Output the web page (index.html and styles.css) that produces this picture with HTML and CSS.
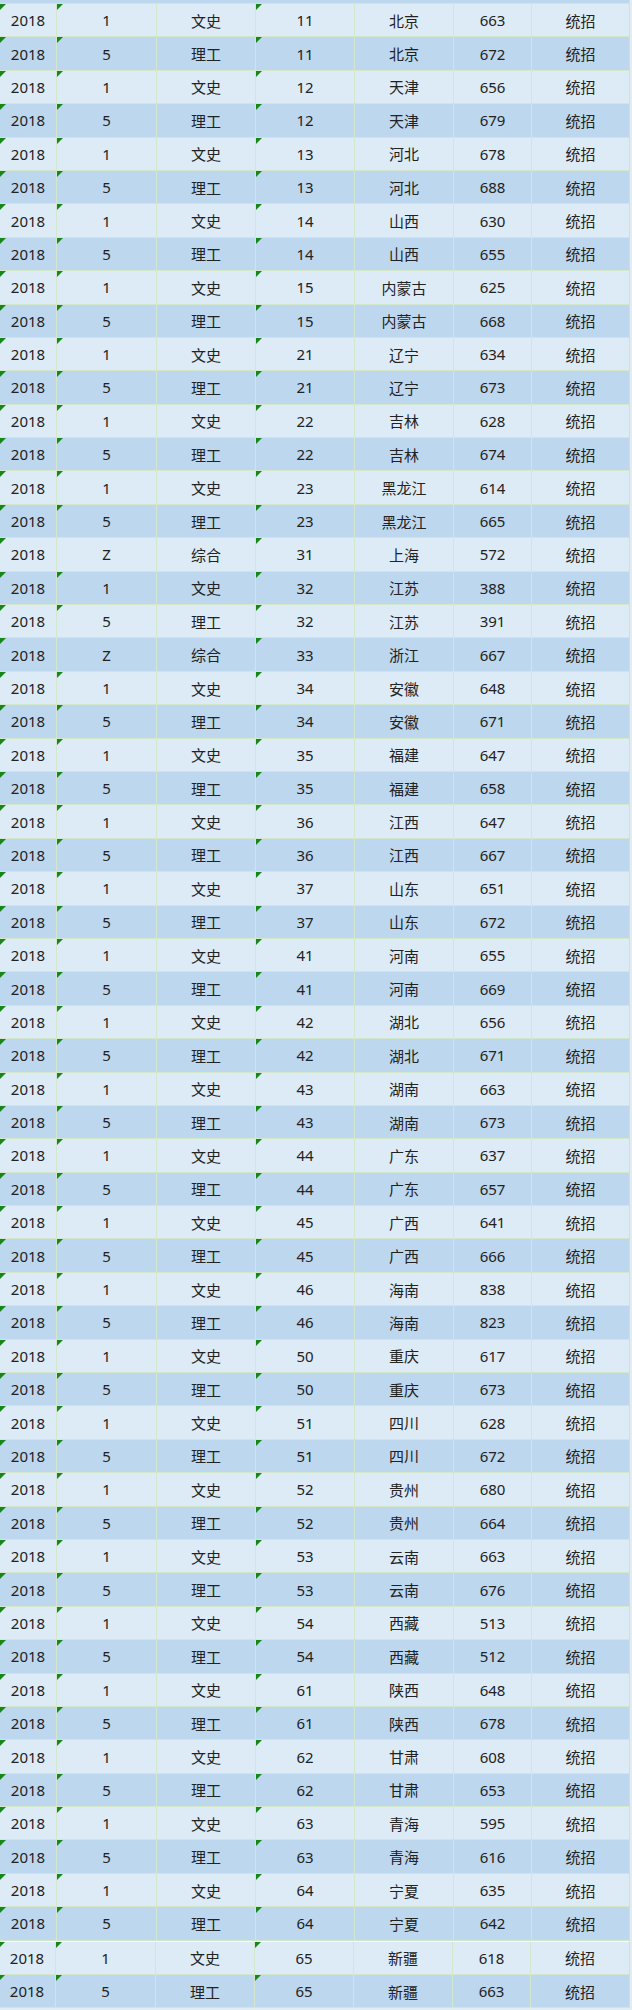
FILE: index.html
```html
<!DOCTYPE html>
<html lang="zh-CN">
<head>
<meta charset="utf-8">
<title>2018 录取分数</title>
<link rel="stylesheet" href="styles.css">
</head>
<body>
<div class="sheet">
  <div class="strip"></div>
  <div class="block">
    <div class="row"><div class="c t">2018</div><div class="c t">1</div><div class="c">文史</div><div class="c t">11</div><div class="c">北京</div><div class="c">663</div><div class="c">统招</div></div>
    <div class="row"><div class="c t">2018</div><div class="c t">5</div><div class="c">理工</div><div class="c t">11</div><div class="c">北京</div><div class="c">672</div><div class="c">统招</div></div>
    <div class="row"><div class="c t">2018</div><div class="c t">1</div><div class="c">文史</div><div class="c t">12</div><div class="c">天津</div><div class="c">656</div><div class="c">统招</div></div>
    <div class="row"><div class="c t">2018</div><div class="c t">5</div><div class="c">理工</div><div class="c t">12</div><div class="c">天津</div><div class="c">679</div><div class="c">统招</div></div>
    <div class="row"><div class="c t">2018</div><div class="c t">1</div><div class="c">文史</div><div class="c t">13</div><div class="c">河北</div><div class="c">678</div><div class="c">统招</div></div>
    <div class="row"><div class="c t">2018</div><div class="c t">5</div><div class="c">理工</div><div class="c t">13</div><div class="c">河北</div><div class="c">688</div><div class="c">统招</div></div>
    <div class="row"><div class="c t">2018</div><div class="c t">1</div><div class="c">文史</div><div class="c t">14</div><div class="c">山西</div><div class="c">630</div><div class="c">统招</div></div>
    <div class="row"><div class="c t">2018</div><div class="c t">5</div><div class="c">理工</div><div class="c t">14</div><div class="c">山西</div><div class="c">655</div><div class="c">统招</div></div>
    <div class="row"><div class="c t">2018</div><div class="c t">1</div><div class="c">文史</div><div class="c t">15</div><div class="c">内蒙古</div><div class="c">625</div><div class="c">统招</div></div>
    <div class="row"><div class="c t">2018</div><div class="c t">5</div><div class="c">理工</div><div class="c t">15</div><div class="c">内蒙古</div><div class="c">668</div><div class="c">统招</div></div>
    <div class="row"><div class="c t">2018</div><div class="c t">1</div><div class="c">文史</div><div class="c t">21</div><div class="c">辽宁</div><div class="c">634</div><div class="c">统招</div></div>
    <div class="row"><div class="c t">2018</div><div class="c t">5</div><div class="c">理工</div><div class="c t">21</div><div class="c">辽宁</div><div class="c">673</div><div class="c">统招</div></div>
    <div class="row"><div class="c t">2018</div><div class="c t">1</div><div class="c">文史</div><div class="c t">22</div><div class="c">吉林</div><div class="c">628</div><div class="c">统招</div></div>
    <div class="row"><div class="c t">2018</div><div class="c t">5</div><div class="c">理工</div><div class="c t">22</div><div class="c">吉林</div><div class="c">674</div><div class="c">统招</div></div>
    <div class="row"><div class="c t">2018</div><div class="c t">1</div><div class="c">文史</div><div class="c t">23</div><div class="c">黑龙江</div><div class="c">614</div><div class="c">统招</div></div>
    <div class="row"><div class="c t">2018</div><div class="c t">5</div><div class="c">理工</div><div class="c t">23</div><div class="c">黑龙江</div><div class="c">665</div><div class="c">统招</div></div>
    <div class="row"><div class="c t">2018</div><div class="c">Z</div><div class="c">综合</div><div class="c t">31</div><div class="c">上海</div><div class="c">572</div><div class="c">统招</div></div>
    <div class="row"><div class="c t">2018</div><div class="c t">1</div><div class="c">文史</div><div class="c t">32</div><div class="c">江苏</div><div class="c">388</div><div class="c">统招</div></div>
    <div class="row"><div class="c t">2018</div><div class="c t">5</div><div class="c">理工</div><div class="c t">32</div><div class="c">江苏</div><div class="c">391</div><div class="c">统招</div></div>
    <div class="row"><div class="c t">2018</div><div class="c">Z</div><div class="c">综合</div><div class="c t">33</div><div class="c">浙江</div><div class="c">667</div><div class="c">统招</div></div>
    <div class="row"><div class="c t">2018</div><div class="c t">1</div><div class="c">文史</div><div class="c t">34</div><div class="c">安徽</div><div class="c">648</div><div class="c">统招</div></div>
    <div class="row"><div class="c t">2018</div><div class="c t">5</div><div class="c">理工</div><div class="c t">34</div><div class="c">安徽</div><div class="c">671</div><div class="c">统招</div></div>
    <div class="row"><div class="c t">2018</div><div class="c t">1</div><div class="c">文史</div><div class="c t">35</div><div class="c">福建</div><div class="c">647</div><div class="c">统招</div></div>
    <div class="row"><div class="c t">2018</div><div class="c t">5</div><div class="c">理工</div><div class="c t">35</div><div class="c">福建</div><div class="c">658</div><div class="c">统招</div></div>
    <div class="row"><div class="c t">2018</div><div class="c t">1</div><div class="c">文史</div><div class="c t">36</div><div class="c">江西</div><div class="c">647</div><div class="c">统招</div></div>
    <div class="row"><div class="c t">2018</div><div class="c t">5</div><div class="c">理工</div><div class="c t">36</div><div class="c">江西</div><div class="c">667</div><div class="c">统招</div></div>
    <div class="row"><div class="c t">2018</div><div class="c t">1</div><div class="c">文史</div><div class="c t">37</div><div class="c">山东</div><div class="c">651</div><div class="c">统招</div></div>
    <div class="row"><div class="c t">2018</div><div class="c t">5</div><div class="c">理工</div><div class="c t">37</div><div class="c">山东</div><div class="c">672</div><div class="c">统招</div></div>
    <div class="row"><div class="c t">2018</div><div class="c t">1</div><div class="c">文史</div><div class="c t">41</div><div class="c">河南</div><div class="c">655</div><div class="c">统招</div></div>
    <div class="row"><div class="c t">2018</div><div class="c t">5</div><div class="c">理工</div><div class="c t">41</div><div class="c">河南</div><div class="c">669</div><div class="c">统招</div></div>
    <div class="row"><div class="c t">2018</div><div class="c t">1</div><div class="c">文史</div><div class="c t">42</div><div class="c">湖北</div><div class="c">656</div><div class="c">统招</div></div>
    <div class="row"><div class="c t">2018</div><div class="c t">5</div><div class="c">理工</div><div class="c t">42</div><div class="c">湖北</div><div class="c">671</div><div class="c">统招</div></div>
    <div class="row"><div class="c t">2018</div><div class="c t">1</div><div class="c">文史</div><div class="c t">43</div><div class="c">湖南</div><div class="c">663</div><div class="c">统招</div></div>
    <div class="row"><div class="c t">2018</div><div class="c t">5</div><div class="c">理工</div><div class="c t">43</div><div class="c">湖南</div><div class="c">673</div><div class="c">统招</div></div>
    <div class="row"><div class="c t">2018</div><div class="c t">1</div><div class="c">文史</div><div class="c t">44</div><div class="c">广东</div><div class="c">637</div><div class="c">统招</div></div>
    <div class="row"><div class="c t">2018</div><div class="c t">5</div><div class="c">理工</div><div class="c t">44</div><div class="c">广东</div><div class="c">657</div><div class="c">统招</div></div>
    <div class="row"><div class="c t">2018</div><div class="c t">1</div><div class="c">文史</div><div class="c t">45</div><div class="c">广西</div><div class="c">641</div><div class="c">统招</div></div>
    <div class="row"><div class="c t">2018</div><div class="c t">5</div><div class="c">理工</div><div class="c t">45</div><div class="c">广西</div><div class="c">666</div><div class="c">统招</div></div>
    <div class="row"><div class="c t">2018</div><div class="c t">1</div><div class="c">文史</div><div class="c t">46</div><div class="c">海南</div><div class="c">838</div><div class="c">统招</div></div>
    <div class="row"><div class="c t">2018</div><div class="c t">5</div><div class="c">理工</div><div class="c t">46</div><div class="c">海南</div><div class="c">823</div><div class="c">统招</div></div>
    <div class="row"><div class="c t">2018</div><div class="c t">1</div><div class="c">文史</div><div class="c t">50</div><div class="c">重庆</div><div class="c">617</div><div class="c">统招</div></div>
    <div class="row"><div class="c t">2018</div><div class="c t">5</div><div class="c">理工</div><div class="c t">50</div><div class="c">重庆</div><div class="c">673</div><div class="c">统招</div></div>
    <div class="row"><div class="c t">2018</div><div class="c t">1</div><div class="c">文史</div><div class="c t">51</div><div class="c">四川</div><div class="c">628</div><div class="c">统招</div></div>
    <div class="row"><div class="c t">2018</div><div class="c t">5</div><div class="c">理工</div><div class="c t">51</div><div class="c">四川</div><div class="c">672</div><div class="c">统招</div></div>
    <div class="row"><div class="c t">2018</div><div class="c t">1</div><div class="c">文史</div><div class="c t">52</div><div class="c">贵州</div><div class="c">680</div><div class="c">统招</div></div>
    <div class="row"><div class="c t">2018</div><div class="c t">5</div><div class="c">理工</div><div class="c t">52</div><div class="c">贵州</div><div class="c">664</div><div class="c">统招</div></div>
    <div class="row"><div class="c t">2018</div><div class="c t">1</div><div class="c">文史</div><div class="c t">53</div><div class="c">云南</div><div class="c">663</div><div class="c">统招</div></div>
    <div class="row"><div class="c t">2018</div><div class="c t">5</div><div class="c">理工</div><div class="c t">53</div><div class="c">云南</div><div class="c">676</div><div class="c">统招</div></div>
    <div class="row"><div class="c t">2018</div><div class="c t">1</div><div class="c">文史</div><div class="c t">54</div><div class="c">西藏</div><div class="c">513</div><div class="c">统招</div></div>
    <div class="row"><div class="c t">2018</div><div class="c t">5</div><div class="c">理工</div><div class="c t">54</div><div class="c">西藏</div><div class="c">512</div><div class="c">统招</div></div>
    <div class="row"><div class="c t">2018</div><div class="c t">1</div><div class="c">文史</div><div class="c t">61</div><div class="c">陕西</div><div class="c">648</div><div class="c">统招</div></div>
    <div class="row"><div class="c t">2018</div><div class="c t">5</div><div class="c">理工</div><div class="c t">61</div><div class="c">陕西</div><div class="c">678</div><div class="c">统招</div></div>
    <div class="row"><div class="c t">2018</div><div class="c t">1</div><div class="c">文史</div><div class="c t">62</div><div class="c">甘肃</div><div class="c">608</div><div class="c">统招</div></div>
    <div class="row"><div class="c t">2018</div><div class="c t">5</div><div class="c">理工</div><div class="c t">62</div><div class="c">甘肃</div><div class="c">653</div><div class="c">统招</div></div>
    <div class="row"><div class="c t">2018</div><div class="c t">1</div><div class="c">文史</div><div class="c t">63</div><div class="c">青海</div><div class="c">595</div><div class="c">统招</div></div>
    <div class="row"><div class="c t">2018</div><div class="c t">5</div><div class="c">理工</div><div class="c t">63</div><div class="c">青海</div><div class="c">616</div><div class="c">统招</div></div>
    <div class="row"><div class="c t">2018</div><div class="c t">1</div><div class="c">文史</div><div class="c t">64</div><div class="c">宁夏</div><div class="c">635</div><div class="c">统招</div></div>
    <div class="row"><div class="c t">2018</div><div class="c t">5</div><div class="c">理工</div><div class="c t">64</div><div class="c">宁夏</div><div class="c">642</div><div class="c">统招</div></div>
  </div>
  <div class="block block-tail">
    <div class="row"><div class="c t">2018</div><div class="c t">1</div><div class="c">文史</div><div class="c t">65</div><div class="c">新疆</div><div class="c">618</div><div class="c">统招</div></div>
    <div class="row"><div class="c t">2018</div><div class="c t">5</div><div class="c">理工</div><div class="c t">65</div><div class="c">新疆</div><div class="c">663</div><div class="c">统招</div></div>
  </div>
</div>
</body>
</html>
```

FILE: styles.css
```css
html, body {
  margin: 0;
  padding: 0;
}

body {
  background: #e3edf1;
  font-family: "Noto Sans", "Noto Sans CJK SC", sans-serif;
  font-size: 15px;
  color: #222222;
}

.sheet {
  width: 632px;
  height: 2010px;
  overflow: hidden;
}

.strip {
  height: 4px;
  width: 630px;
  background: #bdd7ee;
  border-bottom: 1px solid #d2e7cc;
  border-right: 1px solid #d2e7cc;
  box-sizing: border-box;
}

.block {
  width: 630px;
  border-right: 1px solid #cfe0d4;
  box-sizing: border-box;
}

.block-tail {
  border-top: 1px solid #f6fafb;
  width: 631px;
  margin-left: -1px;
}

.row {
  display: grid;
  grid-template-columns: 57px 100px 99px 99px 99px 78px 1fr;
  height: 33.4px;
  box-sizing: border-box;
  background: #ddebf7;
}

.row:nth-child(even) {
  background: #bdd7ee;
}

.c {
  position: relative;
  display: flex;
  align-items: center;
  justify-content: center;
  border-right: 1px solid #d2e7cc;
  border-bottom: 1px solid #d2e7cc;
  box-sizing: border-box;
  white-space: nowrap;
}

.c:last-child {
  border-right: none;
}

.c.t::before {
  content: "";
  position: absolute;
  top: 0;
  left: 0;
  width: 0;
  height: 0;
  border-top: 6px solid #17871a;
  border-right: 6px solid transparent;
}
```
